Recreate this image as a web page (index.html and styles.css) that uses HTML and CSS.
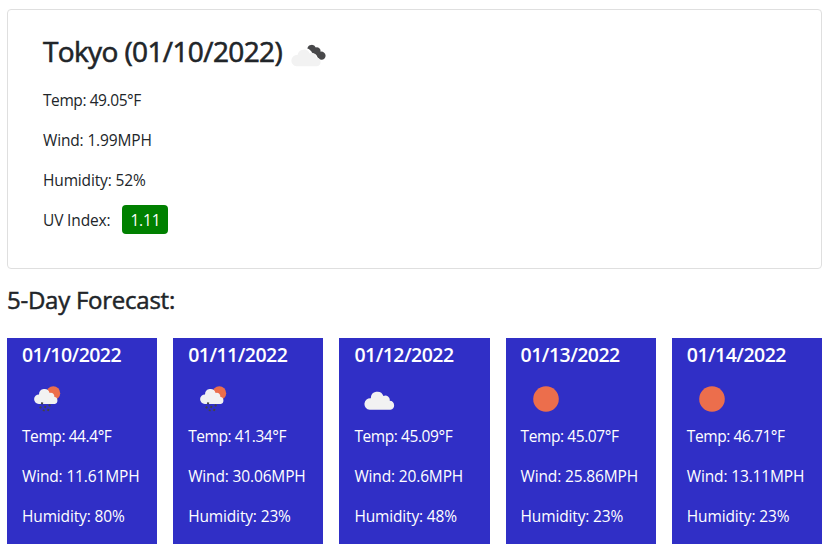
FILE: index.html
```html
<!DOCTYPE html>
<html lang="en">
<head>
<meta charset="utf-8">
<title>Weather Dashboard</title>
<link rel="stylesheet" href="styles.css">
</head>
<body>
<svg class="defs" aria-hidden="true">
  <symbol id="cloud" viewBox="0 0 30 19">
    <path d="M5.5 19A5.6 5.6 0 0 1 6.6 7.8A6.3 6.3 0 0 1 18.8 5.6A4.3 4.3 0 0 1 24.9 10.2A4.45 4.45 0 0 1 25.6 19Z" fill="#f2f2f2"/>
  </symbol>
  <symbol id="sun" viewBox="0 0 26 26"><circle cx="13" cy="13" r="12.8" fill="#ec6e4c"/></symbol>
  <symbol id="rain" viewBox="0 0 27 26">
    <circle cx="19.3" cy="7.2" r="6.9" fill="#ec6e4c"/>
    <path d="M4.8 18A4.8 4.8 0 0 1 5 8.4A5.4 5.4 0 0 1 15.6 7A3.5 3.5 0 0 1 20.3 10.8A3.7 3.7 0 0 1 20.8 18Z" fill="#f2f2f2"/>
    <path d="M8.4 16.4l-.6 1.9M7 20.5l-.9 1.9M11.7 20l-.9 1.9M16 18.5l-.8 1.9M10 23.7l-.6 1.4M14.7 23l-.9 1.9" stroke="#444444" stroke-width="2" fill="none"/>
  </symbol>
  <symbol id="broken" viewBox="0 0 36 23">
    <path d="M16.3 4.5A4.5 4.5 0 0 1 24.8 3.5A3.8 3.8 0 0 1 29.6 7.7A4.1 4.1 0 1 1 30.4 15.8Q27.6 15.8 26.5 13.3Q25.5 9.2 21.5 9.5Q19.5 5.3 16.3 4.5Z" fill="#48484a"/>
    <path d="M5.5 22.2A5.6 5.6 0 0 1 6.5 11A6.4 6.4 0 0 1 18.7 9.5A4 4 0 0 1 24.8 13.5A4.4 4.4 0 0 1 26 22.2Z" fill="#f2f2f2"/>
  </symbol>
</svg>
<main class="page">
  <section class="current">
    <h2 class="city"><span>Tokyo (01/10/2022)</span><svg class="broken"><use href="#broken"/></svg></h2>
    <p class="temp">Temp: 49.05°F</p>
    <p>Wind: 1.99MPH</p>
    <p>Humidity: 52%</p>
    <p class="uv"><span>UV Index:</span><span class="badge">1.11</span></p>
  </section>
  <h3 class="heading">5-Day Forecast:</h3>
  <section class="forecast">
    <article class="day"><h5>01/10/2022</h5><div class="icon"><svg class="rain"><use href="#rain"/></svg></div><p class="temp">Temp: 44.4°F</p><p>Wind: 11.61MPH</p><p>Humidity: 80%</p></article>
    <article class="day"><h5>01/11/2022</h5><div class="icon"><svg class="rain"><use href="#rain"/></svg></div><p class="temp">Temp: 41.34°F</p><p>Wind: 30.06MPH</p><p>Humidity: 23%</p></article>
    <article class="day"><h5>01/12/2022</h5><div class="icon"><svg class="cloud"><use href="#cloud"/></svg></div><p class="temp">Temp: 45.09°F</p><p>Wind: 20.6MPH</p><p>Humidity: 48%</p></article>
    <article class="day"><h5>01/13/2022</h5><div class="icon"><svg class="sun"><use href="#sun"/></svg></div><p class="temp">Temp: 45.07°F</p><p>Wind: 25.86MPH</p><p>Humidity: 23%</p></article>
    <article class="day"><h5>01/14/2022</h5><div class="icon"><svg class="sun"><use href="#sun"/></svg></div><p class="temp">Temp: 46.71°F</p><p>Wind: 13.11MPH</p><p>Humidity: 23%</p></article>
  </section>
</main>
</body>
</html>
```
FILE: styles.css
```css
* { box-sizing: border-box; }
body {
  margin: 0;
  background: #fff;
  color: #212529;
  font: 15.5px/24px "Open Sans", "Noto Sans", sans-serif;
  letter-spacing: -.15px;
}
h2, h3, h5, p { margin: 0; }
svg { display: block; flex: none; }
.defs { display: none; }
.page { padding: 9px 8px 0 7px; }
.current {
  height: 260px;
  padding: 24px 35px;
  border: 1px solid #dfdfdf;
  border-radius: 4px;
}
.city {
  display: flex;
  height: 38px;
  margin-bottom: 16px;
  font-size: 28px;
  font-weight: 500;
  line-height: 34px;
  letter-spacing: -.62px;
  -webkit-text-stroke: .6px currentColor;
}
.broken { width: 36px; height: 23px; margin: 9.5px 0 0 9px; }
.current p { height: 24px; margin-bottom: 16px; }
.temp { letter-spacing: -.42px; }
.uv { display: flex; align-items: center; }
.badge {
  width: 46px;
  height: 29px;
  margin: -2px 0 0 12px;
  border-radius: 4px;
  background: #008000;
  color: #fff;
  line-height: 31px;
  text-align: center;
}
.heading {
  margin: 14px 0 21px;
  font-size: 24px;
  font-weight: 500;
  line-height: 34px;
  letter-spacing: -.25px;
  -webkit-text-stroke: .5px currentColor;
}
.forecast { display: grid; grid-template-columns: repeat(5, 1fr); gap: 16px; }
.day { height: 206px; padding: 5px 0 0 15px; background: #302fc6; color: #fff; }
.day h5 { height: 24px; font-size: 19.5px; font-weight: 600; letter-spacing: -.53px; }
.icon { height: 50px; margin: 7px 0 0; padding: 12px 0 0 12px; }
.day p { margin-bottom: 16px; white-space: nowrap; }
.rain { width: 27px; height: 26px; }
.cloud { width: 31px; height: 20px; margin: 3.5px 0 0 -2px; }
.sun { width: 26px; height: 26px; }
```
